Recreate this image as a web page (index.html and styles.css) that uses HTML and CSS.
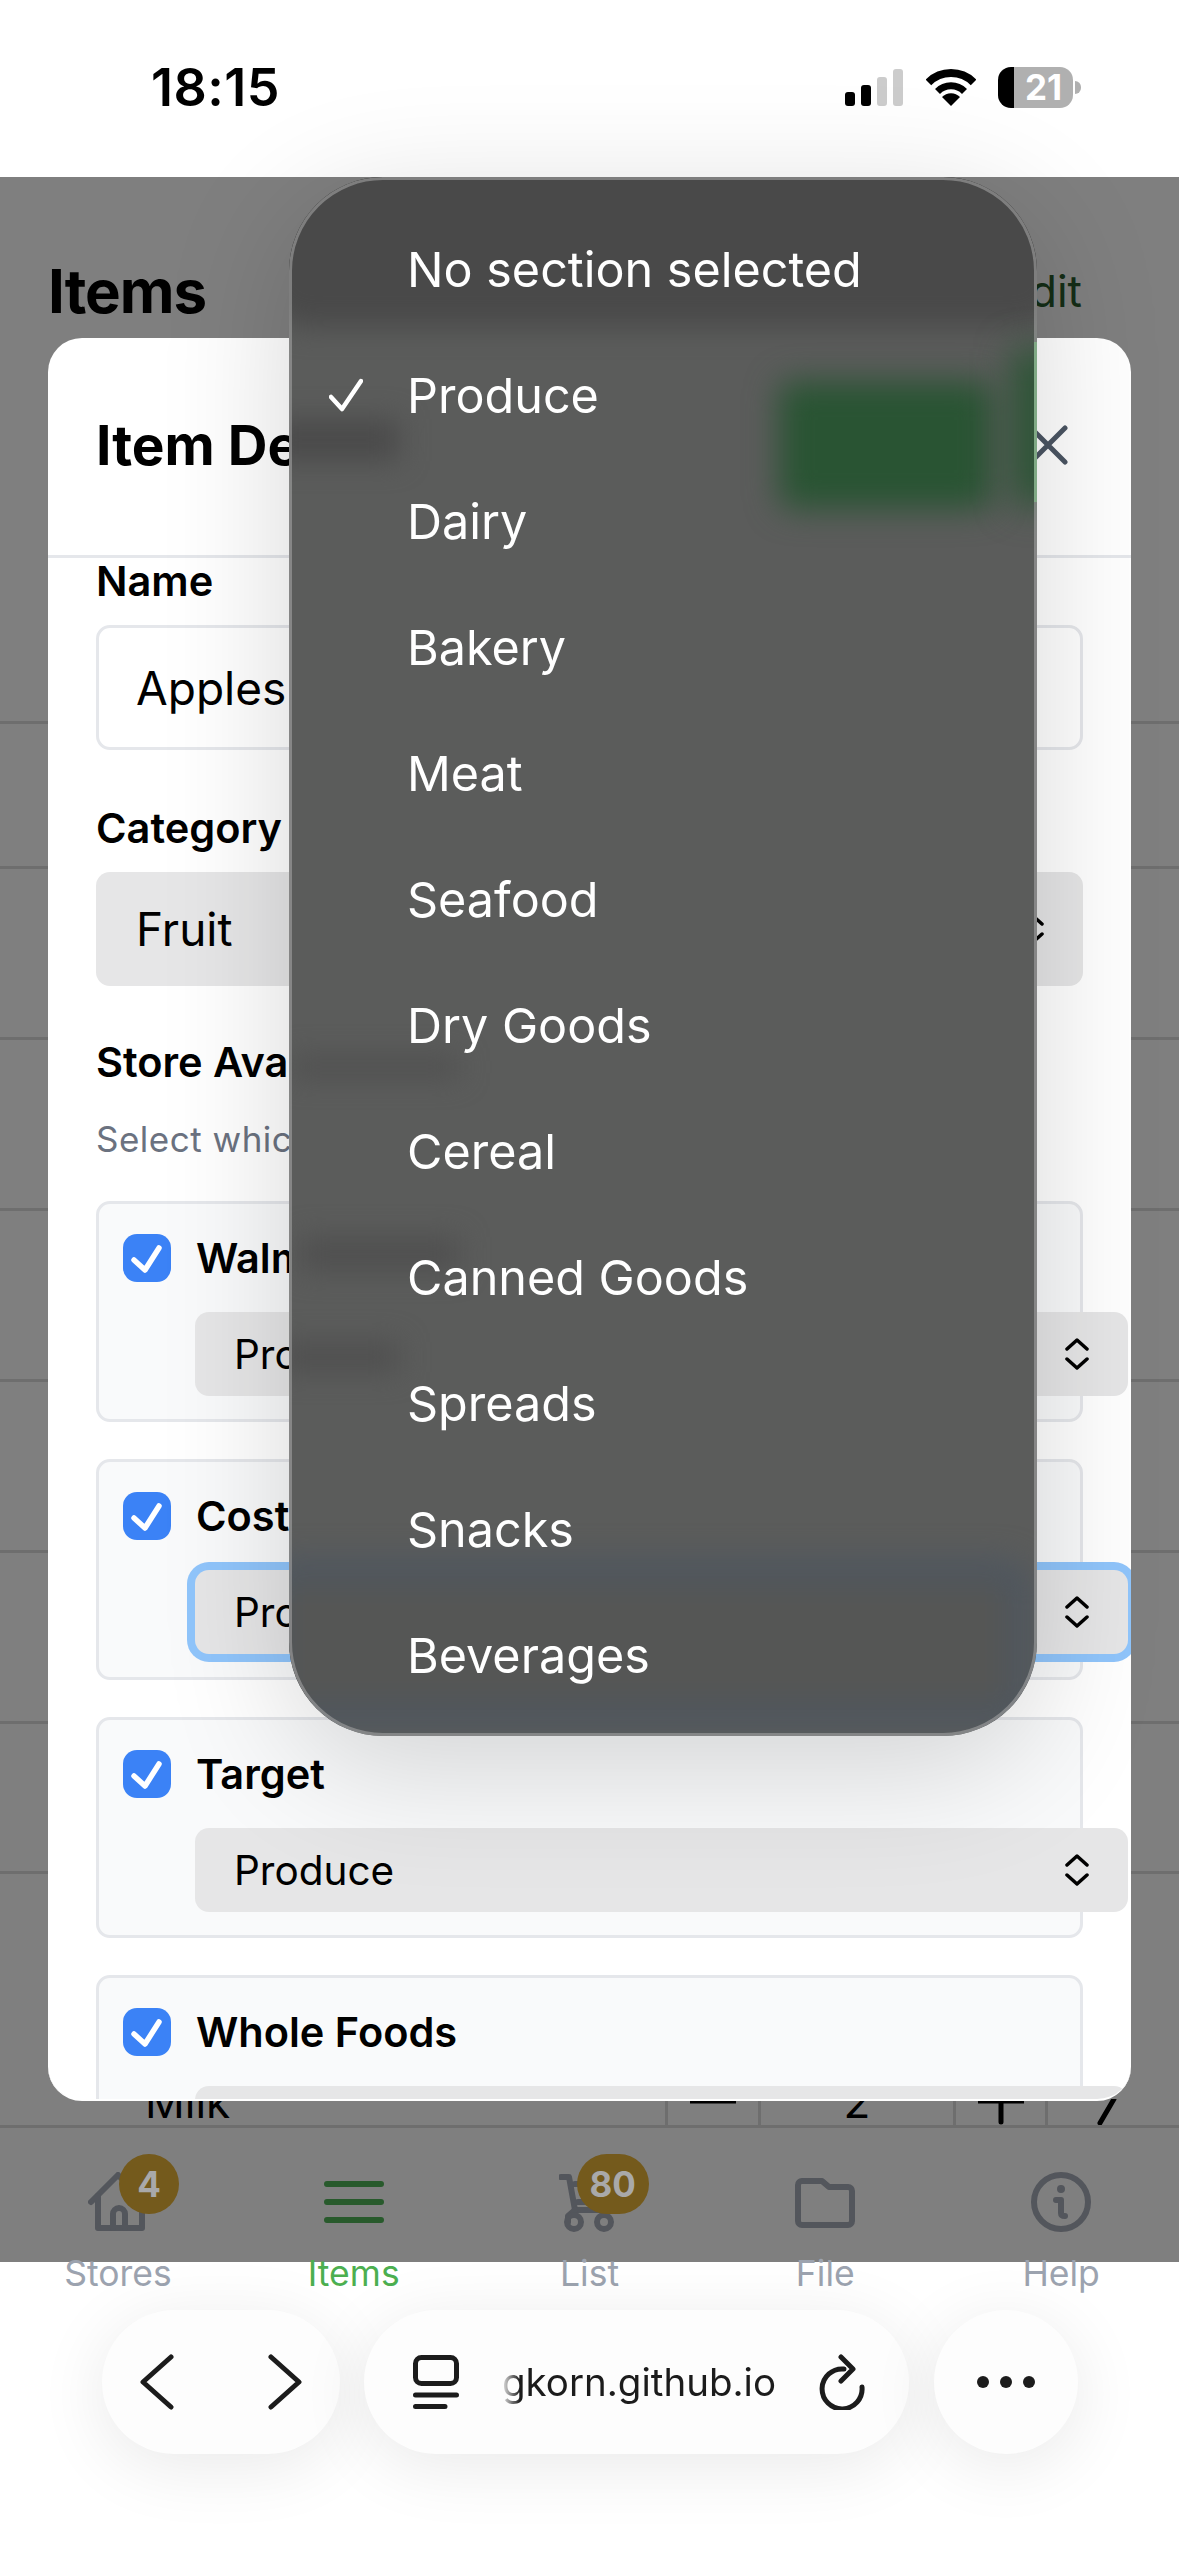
FILE: index.html
```html
<!DOCTYPE html>
<html lang="en">
<head>
  <meta charset="UTF-8" />
  <meta name="viewport" content="width=device-width, initial-scale=1" />
  <title>Items</title>
  <link rel="stylesheet" href="styles.css">
</head>
<body>

  <!-- iOS status bar -->
  <header class="status-bar">
    <span class="clock">18:15</span>
    <div class="status-icons">
      <div class="signal">
        <span class="bar bar-1"></span>
        <span class="bar bar-2"></span>
        <span class="bar bar-3"></span>
        <span class="bar bar-4"></span>
      </div>
      <svg class="wifi" viewBox="0 0 50 37" width="50" height="37">
        <path d="M2.4 13.4A32 32 0 0 1 47.6 13.4" fill="none" stroke="#000" stroke-width="8"/>
        <path d="M11.5 22.5A19 19 0 0 1 38.5 22.5" fill="none" stroke="#000" stroke-width="7"/>
        <path d="M25 37L16 28A12.5 12.5 0 0 1 34 28Z" fill="#000"/>
      </svg>
      <div class="battery"><span class="battery-level">21</span></div>
      <span class="battery-nub"></span>
    </div>
  </header>

  <!-- Page under the modal -->
  <main class="page">
    <div class="page-head">
      <h1 class="page-title">Items</h1>
      <a class="edit-link">Edit</a>
    </div>
    <div class="row row-1"></div>
    <div class="row row-2"></div>
    <div class="row"></div>
    <div class="row"></div>
    <div class="row"></div>
    <div class="row"></div>
    <div class="row row-7"></div>
    <div class="row row-last">
      <span class="row-name">Milk</span>
      <div class="stepper">
        <div class="cell cell-minus"><svg viewBox="0 0 46 26" width="46" height="26"><path d="M0 2H46" stroke="#000" stroke-width="5"/></svg></div>
        <div class="cell cell-qty">2</div>
        <div class="cell cell-plus"><svg viewBox="0 0 46 26" width="46" height="26"><path d="M0 2H46M23 2V23" stroke="#000" stroke-width="5" stroke-linecap="round"/></svg></div>
        <div class="cell cell-go"><svg viewBox="0 0 30 26" width="30" height="26"><path d="M26 0L12 24" stroke="#000" stroke-width="5" stroke-linecap="round"/></svg></div>
      </div>
    </div>
  </main>

  <!-- Bottom tabs -->
  <nav class="tab-bar">
    <div class="tab">
      <span class="badge badge-round">4</span>
      <svg class="tab-icon" viewBox="0 0 60 60" width="60" height="60" fill="none" stroke="#53565c" stroke-width="6" stroke-linecap="round" stroke-linejoin="round">
        <path d="M3 30L30 3L57 30"/>
        <path d="M10 24V56H54V24"/>
        <path d="M25 56V42a6 6 0 0 1 12 0V56"/>
      </svg>
      <span class="tab-label">Stores</span>
    </div>
    <div class="tab tab-active">
      <svg class="tab-icon" viewBox="0 0 60 60" width="60" height="60" fill="none" stroke="#285a2c" stroke-width="6" stroke-linecap="round">
        <path d="M3 12H57M3 30H57M3 48H57"/>
      </svg>
      <span class="tab-label">Items</span>
    </div>
    <div class="tab">
      <span class="badge badge-wide">80</span>
      <svg class="tab-icon" viewBox="0 0 60 60" width="60" height="60" fill="none" stroke="#53565c" stroke-width="6" stroke-linecap="round" stroke-linejoin="round">
        <path d="M2 5H10L16 38H50M16 12H56L52 30H19"/>
        <path d="M16 38L9 44V50"/>
        <circle cx="15" cy="50" r="7"/>
        <circle cx="45" cy="50" r="7"/>
      </svg>
      <span class="tab-label">List</span>
    </div>
    <div class="tab">
      <svg class="tab-icon" viewBox="0 0 60 60" width="60" height="60" fill="none" stroke="#53565c" stroke-width="6" stroke-linecap="round" stroke-linejoin="round">
        <path d="M3 13a4 4 0 0 1 4-4H27L34 15H53a4 4 0 0 1 4 4V49a4 4 0 0 1-4 4H7a4 4 0 0 1-4-4Z"/>
      </svg>
      <span class="tab-label">File</span>
    </div>
    <div class="tab">
      <svg class="tab-icon" viewBox="0 0 60 60" width="60" height="60" fill="none" stroke="#53565c" stroke-width="6" stroke-linecap="round" stroke-linejoin="round">
        <circle cx="30" cy="30" r="27"/>
        <path d="M25 28H30V41Q30 44 34 44"/>
        <circle cx="30" cy="17" r="2.5" fill="#53565c" stroke-width="3"/>
      </svg>
      <span class="tab-label">Help</span>
    </div>
  </nav>

  <!-- Safari toolbar -->
  <footer class="browser-bar">
    <div class="pill pill-nav">
      <svg viewBox="0 0 36 56" width="36" height="56" fill="none" stroke="#1c1c1c" stroke-width="5" stroke-linecap="round" stroke-linejoin="round"><path d="M31 3L3 28L31 53" transform="translate(1 0)"/></svg>
      <svg viewBox="0 0 36 56" width="36" height="56" fill="none" stroke="#1c1c1c" stroke-width="5" stroke-linecap="round" stroke-linejoin="round"><path d="M5 3L33 28L5 53" transform="translate(-1 0)"/></svg>
    </div>
    <div class="pill pill-url">
      <svg class="reader-icon" viewBox="0 0 46 54" width="46" height="54" fill="none" stroke="#1c1c1c" stroke-width="5" stroke-linecap="round">
        <rect x="2.5" y="2.5" width="41" height="26" rx="6"/>
        <path d="M2.5 40H43.5M2.5 51.5H32"/>
      </svg>
      <div class="url-text"><span>gkorn.github.io</span></div>
      <svg class="reload-icon" viewBox="0 0 56 56" width="56" height="56" fill="none" stroke="#1c1c1c" stroke-width="5" stroke-linecap="round" stroke-linejoin="round">
        <path d="M48 33A20 20 0 1 1 30 15"/>
        <path d="M27 3L39 15L27 27"/>
      </svg>
    </div>
    <div class="pill pill-more">
      <span class="dot"></span><span class="dot"></span><span class="dot"></span>
    </div>
  </footer>

  <!-- Dimmed overlay with the item modal -->
  <div class="overlay">
    <section class="modal">
      <div class="modal-head">
        <h2 class="modal-title">Item Details</h2>
        <svg class="modal-close" viewBox="0 0 40 40" width="40" height="40" fill="none" stroke="#4b5563" stroke-width="5" stroke-linecap="round"><path d="M3 3L37 37M37 3L3 37"/></svg>
      </div>
      <div class="modal-body">
        <div class="field">
          <label class="field-label">Name</label>
          <div class="text-input">Apples</div>
        </div>
        <div class="field field-category">
          <label class="field-label">Category</label>
          <div class="select select-large">
            <span>Fruit</span>
            <svg class="updown" viewBox="0 0 24 34" width="24" height="34" fill="none" stroke="#000" stroke-width="3.5" stroke-linecap="round" stroke-linejoin="round"><path d="M2 12L12 3L22 12M2 22L12 31L22 22"/></svg>
          </div>
        </div>
        <div class="field-label">Store Availability</div>
        <p class="helper">Select which stores carry this item</p>

        <div class="store-card">
          <div class="store-row">
            <svg class="check-box" viewBox="0 0 48 48" width="48" height="48"><rect width="48" height="48" rx="14" fill="#3b82f6"/><path d="M11 26L22 36L36 14" fill="none" stroke="#fff" stroke-width="5.5" stroke-linecap="round" stroke-linejoin="round"/></svg>
            <span class="store-name">Walmart</span>
          </div>
          <div class="select select-store">
            <span>Produce</span>
            <svg class="updown" viewBox="0 0 24 34" width="24" height="34" fill="none" stroke="#000" stroke-width="3.5" stroke-linecap="round" stroke-linejoin="round"><path d="M2 12L12 3L22 12M2 22L12 31L22 22"/></svg>
          </div>
        </div>

        <div class="store-card">
          <div class="store-row">
            <svg class="check-box" viewBox="0 0 48 48" width="48" height="48"><rect width="48" height="48" rx="14" fill="#3b82f6"/><path d="M11 26L22 36L36 14" fill="none" stroke="#fff" stroke-width="5.5" stroke-linecap="round" stroke-linejoin="round"/></svg>
            <span class="store-name">Costco</span>
          </div>
          <div class="select select-store select-focus">
            <span>Produce</span>
            <svg class="updown" viewBox="0 0 24 34" width="24" height="34" fill="none" stroke="#000" stroke-width="3.5" stroke-linecap="round" stroke-linejoin="round"><path d="M2 12L12 3L22 12M2 22L12 31L22 22"/></svg>
          </div>
        </div>

        <div class="store-card">
          <div class="store-row">
            <svg class="check-box" viewBox="0 0 48 48" width="48" height="48"><rect width="48" height="48" rx="14" fill="#3b82f6"/><path d="M11 26L22 36L36 14" fill="none" stroke="#fff" stroke-width="5.5" stroke-linecap="round" stroke-linejoin="round"/></svg>
            <span class="store-name">Target</span>
          </div>
          <div class="select select-store">
            <span>Produce</span>
            <svg class="updown" viewBox="0 0 24 34" width="24" height="34" fill="none" stroke="#000" stroke-width="3.5" stroke-linecap="round" stroke-linejoin="round"><path d="M2 12L12 3L22 12M2 22L12 31L22 22"/></svg>
          </div>
        </div>

        <div class="store-card">
          <div class="store-row">
            <svg class="check-box" viewBox="0 0 48 48" width="48" height="48"><rect width="48" height="48" rx="14" fill="#3b82f6"/><path d="M11 26L22 36L36 14" fill="none" stroke="#fff" stroke-width="5.5" stroke-linecap="round" stroke-linejoin="round"/></svg>
            <span class="store-name">Whole Foods</span>
          </div>
          <div class="select select-store"></div>
        </div>
      </div>
    </section>
  </div>

  <!-- Native select popup, with the blurred page showing through -->
  <div class="picker">
    <span class="smear smear-top"></span>
    <span class="smear smear-title"></span>
    <span class="smear smear-green"></span>
    <span class="smear smear-edge"></span>
    <span class="smear smear-store"></span>
    <span class="smear smear-walmart"></span>
    <span class="smear smear-select"></span>
    <span class="smear smear-ring"></span>
    <span class="picker-glint"></span>
    <ul class="picker-list">
      <li class="picker-item"><span></span>No section selected</li>
      <li class="picker-item">
        <svg viewBox="0 0 34 34" width="34" height="34" fill="none" stroke="#fff" stroke-width="4.5" stroke-linecap="round" stroke-linejoin="round"><path d="M2 19L13 31L32 3"/></svg>
        Produce
      </li>
      <li class="picker-item"><span></span>Dairy</li>
      <li class="picker-item"><span></span>Bakery</li>
      <li class="picker-item"><span></span>Meat</li>
      <li class="picker-item"><span></span>Seafood</li>
      <li class="picker-item"><span></span>Dry Goods</li>
      <li class="picker-item"><span></span>Cereal</li>
      <li class="picker-item"><span></span>Canned Goods</li>
      <li class="picker-item"><span></span>Spreads</li>
      <li class="picker-item"><span></span>Snacks</li>
      <li class="picker-item"><span></span>Beverages</li>
    </ul>
  </div>

</body>
</html>
```

FILE: styles.css
```css
* {
  box-sizing: border-box;
}

html, body {
  margin: 0;
  padding: 0;
  width: 1179px;
  height: 2556px;
  overflow: hidden;
  background: #fff;
  font-family: Inter, 'Noto Sans', sans-serif;
  color: #000;
}

/* Status bar */
.status-bar {
  height: 177px;
  display: flex;
  justify-content: space-between;
  padding: 64px 98px 0 151px;
}

.clock {
  font-size: 52px;
  font-weight: 600;
  line-height: 48px;
  letter-spacing: 0.5px;
}

.status-icons {
  display: flex;
  align-items: flex-start;
  height: 48px;
  margin-top: 3px;
}

.signal {
  display: flex;
  align-items: flex-end;
  gap: 6px;
  height: 37px;
  margin-top: 2px;
}

.bar {
  width: 10px;
  border-radius: 3px;
  background: #000;
}
.bar-1 { height: 14px; }
.bar-2 { height: 21px; }
.bar-3 { height: 29px; background: #ccc; }
.bar-4 { height: 37px; background: #ccc; }

.wifi {
  margin: 2px 22px 0 23px;
}

.battery {
  width: 75px;
  height: 41px;
  border-radius: 13px;
  overflow: hidden;
  background: linear-gradient(to right, #000 16px, #b0b0b0 16px);
}

.battery-level {
  display: block;
  padding-left: 16px;
  text-align: center;
  color: #fff;
  font-size: 35px;
  font-weight: 700;
  line-height: 41px;
}

.battery-nub {
  width: 6px;
  height: 13px;
  margin: 14px 0 0 2px;
  border-radius: 0 7px 7px 0;
  background: #b0b0b0;
}

/* Page under the overlay */
.page {
  height: 1951px;
  display: flex;
  flex-direction: column;
}

.page-head {
  height: 547px;
  display: flex;
  justify-content: space-between;
  align-items: flex-start;
  padding: 79px 97px 0 48px;
  border-bottom: 3px solid #dcdcdc;
}

.page-title {
  margin: 0;
  font-size: 60px;
  font-weight: 700;
  line-height: 70px;
  letter-spacing: -1px;
}

.edit-link {
  color: #285a2c;
  font-size: 44px;
  line-height: 70px;
}

.row {
  height: 171px;
  border-bottom: 3px solid #dcdcdc;
}
.row-1 { height: 145px; }
.row-7 { height: 150px; }

.row-last {
  flex: 1;
  height: auto;
  display: flex;
  align-items: flex-end;
  justify-content: space-between;
  padding-left: 145px;
}

.row-name {
  font-size: 44px;
  line-height: 44px;
  margin-bottom: 1px;
}

.stepper {
  display: flex;
  height: 100%;
}

.cell {
  display: flex;
  justify-content: center;
  align-items: flex-end;
  border-left: 3px solid #dcdcdc;
  font-size: 44px;
  line-height: 44px;
}
.cell-minus { width: 93px; }
.cell-qty { width: 195px; padding-bottom: 1px; }
.cell-plus { width: 92px; }
.cell-go { width: 134px; padding-right: 22px; }

/* Tab bar sits above the overlay in paint order, its colours are the dimmed ones */
.tab-bar {
  position: relative;
  z-index: 2;
  height: 172px;
  display: grid;
  grid-template-columns: repeat(5, 1fr);
  padding-top: 44px;
}

.tab {
  position: relative;
  display: flex;
  flex-direction: column;
  align-items: center;
  gap: 22px;
}

.tab-icon {
  display: block;
}

.tab-label {
  color: #9ca3af;
  font-size: 35.5px;
  line-height: 40px;
}

.tab-active .tab-label {
  color: #4caf50;
}

.badge {
  position: absolute;
  top: -18px;
  z-index: 1;
  height: 60px;
  border-radius: 30px;
  background: #745a1c;
  color: #a9a9a9;
  font-size: 35px;
  font-weight: 700;
  line-height: 60px;
  text-align: center;
}
.badge-round { left: 119px; width: 60px; }
.badge-wide { left: 105px; width: 72px; }

/* Browser toolbar */
.browser-bar {
  position: relative;
  z-index: 2;
  height: 256px;
  display: flex;
  align-items: flex-start;
  gap: 24px;
  padding: 10px 0 0 102px;
}

.pill {
  height: 144px;
  border-radius: 72px;
  background: #fdfdfd;
  box-shadow: 0 12px 70px rgba(0, 0, 0, 0.09);
  display: flex;
  align-items: center;
}

.pill-nav {
  width: 238px;
  justify-content: space-between;
  padding: 0 37px;
}

.pill-url {
  width: 545px;
  padding-left: 49px;
}

.url-text {
  width: 276px;
  margin-left: 41px;
  display: flex;
  justify-content: flex-end;
  overflow: hidden;
  white-space: nowrap;
  color: #1c1c1c;
  font-size: 38.5px;
  -webkit-mask-image: linear-gradient(to right, transparent 0, #000 20px);
  mask-image: linear-gradient(to right, transparent 0, #000 20px);
}

.reload-icon {
  margin-left: 38px;
}

.pill-more {
  width: 144px;
  justify-content: center;
  gap: 11px;
  margin-left: 1px;
}

.dot {
  width: 12px;
  height: 12px;
  border-radius: 50%;
  background: #1c1c1c;
}

/* Overlay + modal */
.overlay {
  position: absolute;
  top: 177px;
  left: 0;
  width: 1179px;
  height: 2085px;
  z-index: 1;
  padding: 161px 48px 0;
  background: rgba(0, 0, 0, 0.5);
}

.modal {
  height: 1763px;
  border-radius: 34px;
  border-bottom: 2px solid #fff;
  overflow: hidden;
  background: #fff;
}

.modal-head {
  height: 220px;
  display: flex;
  justify-content: space-between;
  align-items: center;
  padding: 0 63px 4px 48px;
  border-bottom: 3px solid #e5e7eb;
}

.modal-title {
  margin: 0;
  font-size: 55px;
  font-weight: 700;
}

.modal-body {
  padding: 0 48px;
}

.field {
  margin-bottom: 55px;
}

.field-category {
  margin-bottom: 53px;
}

.field-label {
  display: block;
  height: 51px;
  margin-bottom: 16px;
  font-size: 41.5px;
  font-weight: 600;
  line-height: 47px;
}

.text-input {
  height: 125px;
  padding-left: 37px;
  border: 3px solid #e5e7eb;
  border-radius: 14px;
  font-size: 46px;
  line-height: 121px;
}

.select {
  display: flex;
  justify-content: space-between;
  align-items: center;
  background: #e6e6e7;
  border-radius: 14px;
}

.select-large {
  height: 114px;
  padding: 0 39px 0 40px;
  font-size: 46px;
}

.helper {
  margin: 26px 0 39px;
  height: 46px;
  color: #6b7280;
  font-size: 35px;
  line-height: 46px;
  letter-spacing: 0.5px;
}

.store-card {
  height: 221px;
  margin-bottom: 37px;
  padding: 30px 24px 0;
  border: 3px solid #e5e7eb;
  border-radius: 14px;
  background: #f9fafb;
}

.store-row {
  display: flex;
  align-items: center;
  gap: 25px;
  height: 48px;
  margin-bottom: 30px;
}

.check-box {
  flex: none;
}

.store-name {
  font-size: 41.5px;
  font-weight: 600;
}

/* width 100% plus the margin: the box runs past the card, as in the app */
.select-store {
  width: 100%;
  height: 84px;
  margin-left: 72px;
  padding: 0 39px 0 39px;
  font-size: 40.5px;
}

.select-focus {
  box-shadow: 0 0 0 8px #90c5fb;
}

/* Select popup */
.picker {
  position: absolute;
  top: 177px;
  left: 289px;
  z-index: 3;
  width: 748px;
  height: 1559px;
  border-radius: 94px;
  overflow: hidden;
  background: #5b5c5b;
  box-shadow: 0 30px 130px rgba(0, 0, 0, 0.16);
}

.picker::after {
  content: '';
  position: absolute;
  inset: 0;
  border: 3px solid rgba(170, 170, 170, 0.55);
  border-radius: 94px;
  pointer-events: none;
}

.smear {
  position: absolute;
  display: block;
  filter: blur(14px);
}

.smear-top {
  left: -30px;
  right: -30px;
  top: -40px;
  height: 190px;
  border-radius: 50px;
  background: #494949;
}

.smear-title {
  left: -20px;
  top: 242px;
  width: 130px;
  height: 42px;
  background: #4a4a4a;
}

.smear-green {
  left: 490px;
  top: 204px;
  width: 214px;
  height: 128px;
  border-radius: 14px;
  background: #295433;
  filter: blur(16px);
}

.smear-edge {
  left: 724px;
  top: 172px;
  width: 44px;
  height: 156px;
  background: #295433;
  filter: blur(18px);
}

.smear-store {
  left: 0;
  top: 880px;
  width: 170px;
  height: 20px;
  background: #4f4f4f;
}

.smear-walmart {
  left: 10px;
  top: 1060px;
  width: 160px;
  height: 34px;
  background: #4f4f4f;
}

.smear-select {
  left: -10px;
  top: 1165px;
  width: 120px;
  height: 30px;
  background: #4f4f4f;
}

.smear-ring {
  left: -30px;
  right: 6px;
  top: 1382px;
  height: 168px;
  border: 22px solid #4d5660;
  border-radius: 30px;
  background: #555655;
  filter: blur(15px);
}

.picker-glint {
  position: absolute;
  right: 0;
  top: 165px;
  width: 3px;
  height: 160px;
  background: #4fa85a;
}

.picker-list {
  position: relative;
  list-style: none;
  margin: 0;
  padding: 29px 0 0;
}

.picker-item {
  display: flex;
  align-items: center;
  height: 126px;
  padding-left: 40px;
  color: #fff;
  font-size: 48.5px;
}

.picker-item svg {
  margin-right: 44px;
}

.picker-item span {
  width: 78px;
}
```
